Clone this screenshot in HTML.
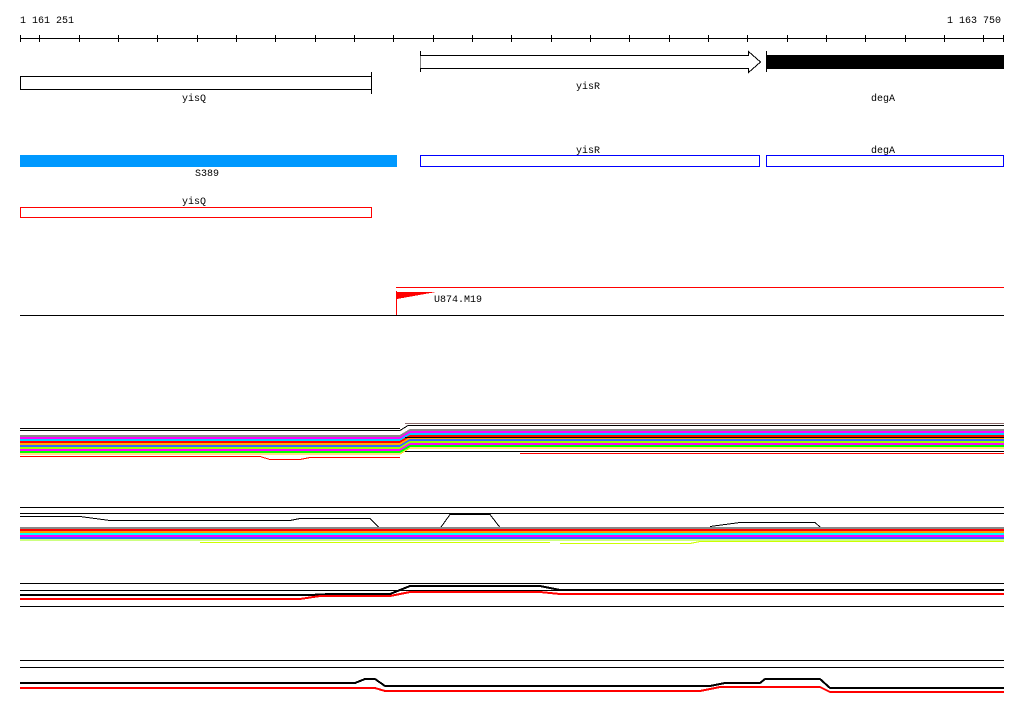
<!DOCTYPE html>
<html><head><meta charset="utf-8"><style>
html,body{margin:0;padding:0;background:#fff;width:1024px;height:714px;overflow:hidden}
svg{display:block}
text{font-family:"Liberation Mono",monospace;font-size:10px;fill:#000}
</style></head><body>
<svg width="1024" height="714" xmlns="http://www.w3.org/2000/svg" shape-rendering="crispEdges">
<text x="20" y="23">1 161 251</text>
<text x="947" y="23">1 163 750</text>
<line x1="20" y1="38.5" x2="1004" y2="38.5" stroke="#000"/>
<g stroke="#000">
<line x1="20.5" y1="35" x2="20.5" y2="42"/>
<line x1="39.5" y1="35" x2="39.5" y2="42"/><line x1="79.5" y1="35" x2="79.5" y2="42"/><line x1="118.5" y1="35" x2="118.5" y2="42"/><line x1="157.5" y1="35" x2="157.5" y2="42"/><line x1="197.5" y1="35" x2="197.5" y2="42"/><line x1="236.5" y1="35" x2="236.5" y2="42"/><line x1="275.5" y1="35" x2="275.5" y2="42"/><line x1="315.5" y1="35" x2="315.5" y2="42"/><line x1="354.5" y1="35" x2="354.5" y2="42"/><line x1="393.5" y1="35" x2="393.5" y2="42"/><line x1="433.5" y1="35" x2="433.5" y2="42"/><line x1="472.5" y1="35" x2="472.5" y2="42"/><line x1="511.5" y1="35" x2="511.5" y2="42"/><line x1="551.5" y1="35" x2="551.5" y2="42"/><line x1="590.5" y1="35" x2="590.5" y2="42"/><line x1="629.5" y1="35" x2="629.5" y2="42"/><line x1="669.5" y1="35" x2="669.5" y2="42"/><line x1="708.5" y1="35" x2="708.5" y2="42"/><line x1="747.5" y1="35" x2="747.5" y2="42"/><line x1="787.5" y1="35" x2="787.5" y2="42"/><line x1="826.5" y1="35" x2="826.5" y2="42"/><line x1="865.5" y1="35" x2="865.5" y2="42"/><line x1="905.5" y1="35" x2="905.5" y2="42"/><line x1="944.5" y1="35" x2="944.5" y2="42"/><line x1="983.5" y1="35" x2="983.5" y2="42"/><line x1="1003.5" y1="35" x2="1003.5" y2="42"/>
</g>
<!-- yisR arrow -->
<line x1="420.5" y1="51" x2="420.5" y2="72" stroke="#000"/>
<path d="M420.5 55.5 H748.5 V51.5 L760.5 62 L748.5 72.5 V68.5 H420.5" fill="#fff" stroke="#000"/>
<line x1="766.5" y1="51" x2="766.5" y2="72" stroke="#000"/>
<rect x="766" y="55" width="238" height="14" fill="#000"/>
<text x="576" y="89">yisR</text>
<text x="871" y="101">degA</text>
<!-- yisQ -->
<rect x="20.5" y="76.5" width="351" height="13" fill="#fff" stroke="#000"/>
<line x1="371.5" y1="72" x2="371.5" y2="94" stroke="#000"/>
<text x="182" y="101">yisQ</text>
<!-- row 2 -->
<rect x="20" y="155" width="377" height="12" fill="#0099ff"/>
<text x="195" y="176">S389</text>
<text x="576" y="153">yisR</text>
<text x="871" y="153">degA</text>
<rect x="420.5" y="155.5" width="339" height="11" fill="#fff" stroke="#0000ff"/>
<rect x="766.5" y="155.5" width="237" height="11" fill="#fff" stroke="#0000ff"/>
<text x="182" y="204">yisQ</text>
<rect x="20.5" y="207.5" width="351" height="10" fill="#fff" stroke="#ff0000"/>
<!-- marker -->
<line x1="396" y1="287.5" x2="1004" y2="287.5" stroke="#ff0000"/>
<line x1="396.5" y1="291" x2="396.5" y2="316" stroke="#ff0000"/>
<path d="M397 292 H436 L397 299 Z" fill="#ff0000"/>
<text x="434" y="302">U874.M19</text>
<line x1="20" y1="315.5" x2="1004" y2="315.5" stroke="#000"/>
<!-- band 1 -->
<g>
<line x1="20" y1="428.5" x2="400" y2="428.5" stroke="#000"/>
<line x1="405" y1="423.5" x2="1004" y2="423.5" stroke="#8a6b6b"/>
<path d="M20 430.5 H400 L408 425.5 H1004" stroke="#000" fill="none"/>
<path d="M20 436 H400 L410 430 H1004" stroke="#888" stroke-width="2" fill="none"/>
<path d="M20 438 H400 L410 432 H1004" stroke="#ff00ff" stroke-width="2" fill="none"/>
<path d="M20 440 H400 L410 434 H1004" stroke="#00ccff" stroke-width="2" fill="none"/>
<path d="M20 442 H400 L410 436 H1004" stroke="#ff0000" stroke-width="2" fill="none"/>
<path d="M20 444 H400 L410 438 H1004" stroke="#ffaa00" stroke-width="2" fill="none"/>
<path d="M20 446 H400 L410 440 H1004" stroke="#3366ff" stroke-width="2" fill="none"/>
<path d="M20 448 H400 L410 442 H1004" stroke="#99ff00" stroke-width="2" fill="none"/>
<path d="M20 450 H400 L410 444 H1004" stroke="#ff00ff" stroke-width="2" fill="none"/>
<path d="M20 452 H400 L410 446 H1004" stroke="#00ff00" stroke-width="2" fill="none"/>
<path d="M20 454 H400 L410 448 H1004" stroke="#ffcc00" stroke-width="1" fill="none"/>
<line x1="405" y1="437.5" x2="1004" y2="437.5" stroke="#000"/>
<line x1="405" y1="451.5" x2="1004" y2="451.5" stroke="#000"/>
<path d="M20 456.5 H260 L270 459.5 H300 L310 457.5 H400" stroke="#ff0000" fill="none"/>
<path d="M520 453.5 H1004" stroke="#ff0000" fill="none"/>
</g>
<!-- band 2 -->
<line x1="20" y1="507.5" x2="1004" y2="507.5" stroke="#000"/>
<line x1="20" y1="513.5" x2="1004" y2="513.5" stroke="#000"/>
<path d="M20 516.5 H80 L110 520.5 H290 L300 518.5 H370 L380 528.5 H440 L450 514.5 H490 L500 527.5 H1004" stroke="#000" fill="none"/>
<path d="M710 526.5 L740 522.5 H815 L825 531.5" stroke="#000" fill="none"/>
<path d="M20 528 H1004" stroke="#888" stroke-width="2"/>
<path d="M20 530 H1004" stroke="#ff0000" stroke-width="2"/>
<path d="M20 532 H1004" stroke="#ff9900" stroke-width="2"/>
<path d="M20 534 H1004" stroke="#00ffff" stroke-width="2"/>
<path d="M20 536 H1004" stroke="#ff00ff" stroke-width="2"/>
<path d="M20 538 H1004" stroke="#3366ff" stroke-width="2"/>
<path d="M20 540 H1004" stroke="#99ff00" stroke-width="1"/>
<path d="M200 542.5 H550 M560 543.5 H690 L700 541.5 H1004" stroke="#ccff00" fill="none"/>
<!-- band 3 -->
<line x1="20" y1="583.5" x2="1004" y2="583.5" stroke="#000"/>
<line x1="20" y1="590.5" x2="1004" y2="590.5" stroke="#000"/>
<line x1="20" y1="606.5" x2="1004" y2="606.5" stroke="#000"/>
<path d="M20 595 H310 L330 594 H390 L410 586 H540 L560 590 H1004" stroke="#000" stroke-width="2" fill="none"/>
<path d="M20 599 H300 L320 596 H390 L410 592 H540 L560 594 H1004" stroke="#ff0000" stroke-width="2" fill="none"/>
<!-- band 4 -->
<line x1="20" y1="660.5" x2="1004" y2="660.5" stroke="#000"/>
<line x1="20" y1="667.5" x2="1004" y2="667.5" stroke="#000"/>
<path d="M20 683 H355 L365 679 H375 L385 686 H710 L725 683 H760 L765 679 H820 L830 688 H1004" stroke="#000" stroke-width="2" fill="none"/>
<path d="M20 688 H375 L385 691 H700 L720 687 H820 L830 692 H1004" stroke="#ff0000" stroke-width="2" fill="none"/>
</svg>
</body></html>
